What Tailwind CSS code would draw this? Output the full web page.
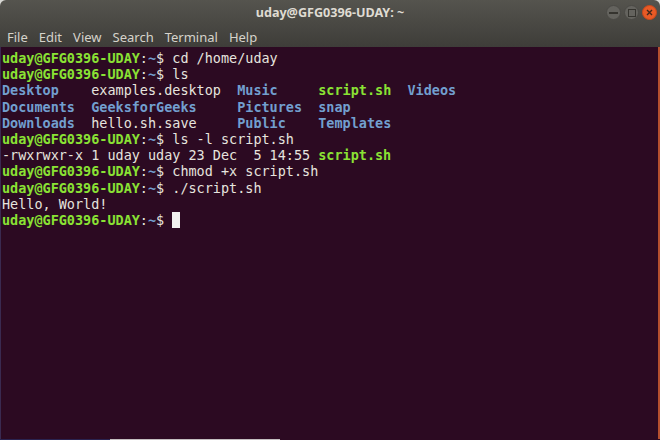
<!DOCTYPE html>
<html lang="en">
<head>
    <meta charset="UTF-8" />
    <title>uday@GFG0396-UDAY: ~</title>
    <script src="https://cdn.jsdelivr.net/npm/@tailwindcss/browser@4"></script>
</head>
<body class="bg-[#2c0a22] m-0 overflow-hidden">
    <div class="w-[660px] h-[440px] flex flex-col bg-[#d8d8d4]">
        <!-- title bar + menu -->
        <div class="h-[47px] shrink-0 rounded-t-[6px] bg-gradient-to-b from-[#55544e] to-[#3e3d39] flex flex-col">
            <div class="h-[26px] relative flex items-center justify-center font-['Noto_Sans',sans-serif] text-[12.6px] font-bold text-[#dfdbd2]">
                uday@GFG0396-UDAY: ~
                <div class="absolute right-[3px] top-[5px] flex gap-[3px]">
                    <div class="w-[15px] h-[15px] rounded-full bg-[#64635e] border border-[#4a4945] flex items-center justify-center">
                        <div class="w-[9px] h-[2px] bg-[#35342f]"></div>
                    </div>
                    <div class="w-[15px] h-[15px] rounded-full bg-[#64635e] border border-[#4a4945] flex items-center justify-center">
                        <div class="w-[8px] h-[8px] border border-[#35342f]"></div>
                    </div>
                    <div class="w-[15px] h-[15px] rounded-full bg-[#e95a26] border border-[#c9481b] flex items-center justify-center">
                        <svg width="7" height="7" viewBox="0 0 7 7"><path d="M1 1l5 5M6 1l-5 5" stroke="#43281c" stroke-width="1.4"/></svg>
                    </div>
                </div>
            </div>
            <div class="flex gap-[11px] pl-[7px] pt-[2px] font-['Noto_Sans',sans-serif] text-[13px] leading-[18px] text-[#d6d3cb]">
                <span>File</span><span>Edit</span><span>View</span><span>Search</span><span>Terminal</span><span>Help</span>
            </div>
        </div>
        <!-- terminal -->
        <div class="flex-1 flex flex-col bg-[#2c0a22] border-l border-l-[#3a2a50] border-r-2 border-r-[#b5502f] pl-[1px] pt-[3px] font-['DejaVu_Sans_Mono',monospace] text-[13.48px] leading-[16.2px] text-[#e6e4df] whitespace-pre font-medium">
<div><b class="text-[#8ae234]">uday@GFG0396-UDAY</b>:<b class="text-[#729fcf]">~</b>$ cd /home/uday</div>
<div><b class="text-[#8ae234]">uday@GFG0396-UDAY</b>:<b class="text-[#729fcf]">~</b>$ ls</div>
<div class="font-bold text-[#729fcf]">Desktop    <span class="font-medium text-[#e6e4df]">examples.desktop</span>  Music     <span class="text-[#8ae234]">script.sh</span>  Videos</div>
<div class="font-bold text-[#729fcf]">Documents  GeeksforGeeks     Pictures  snap</div>
<div class="font-bold text-[#729fcf]">Downloads  <span class="font-medium text-[#e6e4df]">hello.sh.save</span>     Public    Templates</div>
<div><b class="text-[#8ae234]">uday@GFG0396-UDAY</b>:<b class="text-[#729fcf]">~</b>$ ls -l script.sh</div>
<div>-rwxrwxr-x 1 uday uday 23 Dec  5 14:55 <b class="text-[#8ae234]">script.sh</b></div>
<div><b class="text-[#8ae234]">uday@GFG0396-UDAY</b>:<b class="text-[#729fcf]">~</b>$ chmod +x script.sh</div>
<div><b class="text-[#8ae234]">uday@GFG0396-UDAY</b>:<b class="text-[#729fcf]">~</b>$ ./script.sh</div>
<div>Hello, World!</div>
<div class="flex"><span><b class="text-[#8ae234]">uday@GFG0396-UDAY</b>:<b class="text-[#729fcf]">~</b>$ </span><span class="w-[8px] h-[16px] bg-[#f0f0ee]"></span></div>
        </div>
        <!-- what shows below the window -->
        <div class="h-px shrink-0 flex">
            <div class="w-[110px] bg-[#2a2350]"></div>
            <div class="w-[170px] bg-[#c4bfc0]"></div>
            <div class="flex-1 bg-[#2c0a22]"></div>
        </div>
    </div>
</body>
</html>
